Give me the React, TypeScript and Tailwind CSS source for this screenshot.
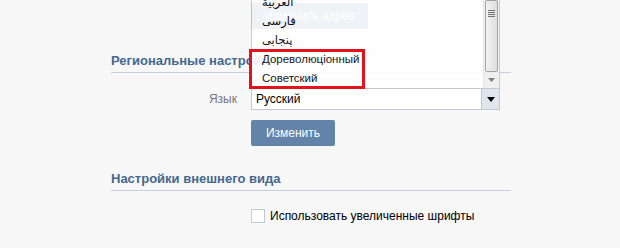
import React from "react";

const font = { fontFamily: '"Liberation Sans","DejaVu Sans",sans-serif' };

export default function App() {
  const items = ["العربية", "فارسی", "پنجابی", "Дореволюцiонный", "Советский"];
  return (
    <div className="relative w-[620px] h-[248px] overflow-hidden bg-[#f7f7f7] text-[12px] text-black" style={font}>
      <div className="flex flex-col pl-[111px] pr-[109px]">
        <div className="pl-[140px] pt-[3px]">
          <div className="w-[117px] h-[26px] rounded-[2px] bg-[#6383a8] text-white flex items-center justify-center text-[12px]">
            Изменить адрес
          </div>
        </div>
        <div className="mt-[25px] border-b border-[#c3d0e0] pb-[4px]">
          <div className="font-bold text-[13px] text-[#45688e] leading-[14px]">Региональные настройки</div>
        </div>
        <div className="mt-[15px] flex items-center">
          <div className="w-[140px] pr-[14px] text-right text-[#777]">Язык</div>
          <div className="relative w-[249px] h-[22px] border border-[#c0cad5] bg-white flex items-center">
            <span className="pl-[4px] flex-1">Русский</span>
            <div className="w-[18px] h-full bg-[#dfe6ed] border-l border-[#c0cad5] flex items-center justify-center">
              <svg width="8" height="5" viewBox="0 0 8 5"><path d="M0 0h8L4 5z" fill="#000" /></svg>
            </div>
            <div className="absolute left-[-1px] bottom-[21px] w-[249px] h-[120px] border border-[#c0cad5] border-b-0 bg-white opacity-90 flex">
              <div className="flex-1 flex flex-col justify-end">
                {items.map((t) => (
                  <div key={t} className="h-[19px] pl-[10px] flex items-center text-[11.5px]">{t}</div>
                ))}
              </div>
              <div className="w-[16px] bg-[#f0f0f0] border-l border-[#e4e4e4] flex flex-col justify-end pb-[1px]">
                <div className="mx-[1px] h-[72px] rounded-[2px] border border-[#9a9a9a] bg-gradient-to-r from-[#f2f2f2] to-[#dcdcdc] flex flex-col items-center justify-end pb-[54px] gap-[1px]">
                  <div className="w-[7px] h-px bg-[#666]" />
                  <div className="w-[7px] h-px bg-[#666]" />
                  <div className="w-[7px] h-px bg-[#666]" />
                  <div className="w-[7px] h-px bg-[#666]" />
                </div>
                <div className="h-[15px] flex items-center justify-center">
                  <svg width="7" height="4" viewBox="0 0 7 4"><path d="M0 0h7L3.5 4z" fill="#707070" /></svg>
                </div>
              </div>
            </div>
            <div className="absolute left-[-3px] top-[-40px] w-[116px] h-[40px] border-[3px] border-[#e3131b]" />
          </div>
        </div>
        <div className="mt-[10px] pl-[140px]">
          <div className="w-[84px] h-[26px] rounded-[2px] bg-[#6383a8] text-white flex items-center justify-center">Изменить</div>
        </div>
        <div className="mt-[26px] border-b border-[#c3d0e0] pb-[4px]">
          <div className="font-bold text-[13px] text-[#45688e] leading-[14px]">Настройки внешнего вида</div>
        </div>
        <div className="mt-[16px] pl-[140px] flex items-center">
          <div className="w-[14px] h-[14px] border border-[#c0cad5] bg-white" />
          <span className="ml-[5px]">Использовать увеличенные шрифты</span>
        </div>
      </div>
    </div>
  );
}
